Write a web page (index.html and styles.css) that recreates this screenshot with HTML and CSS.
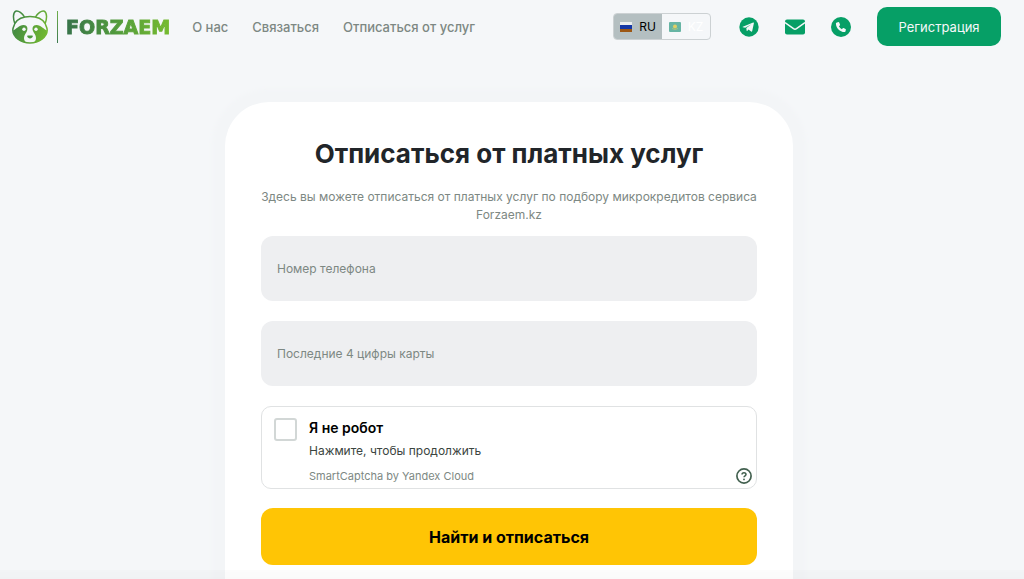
FILE: index.html
```
<!DOCTYPE html>
<html lang="ru">
<head>
<meta charset="utf-8">
<meta name="viewport" content="width=device-width, initial-scale=1">
<title>Отписаться от платных услуг</title>
<link rel="stylesheet" href="styles.css">
</head>
<body>
<header class="header">
	<a class="logo" href="#">
		<svg class="logo-icon" viewBox="0 0 36 34" aria-hidden="true">
			<defs>
				<linearGradient id="fur" gradientUnits="userSpaceOnUse" x1="0" y1="8" x2="36" y2="20">
					<stop offset="0" stop-color="#3c8444"/>
					<stop offset="1" stop-color="#72b832"/>
				</linearGradient>
			</defs>
			<g fill="none" stroke="url(#fur)" stroke-width="1.5" stroke-linejoin="round">
				<path d="M2.800 13.500C1 9 0.800 3 3.600 1.200C6.500 0.200 10.500 3.500 12.500 7"/>
				<path d="M33.200 13.500C35 9 35.200 3 32.400 1.200C29.500 0.200 25.500 3.500 23.500 7"/>
				<path d="M2.800 13.500C5.500 9 11 6.500 18 6.500S30.500 9 33.200 13.500C33.500 15.500 35.200 17 35.200 20C35.200 27 27 33 18 33S0.800 27 0.800 20C0.800 17 2.500 15.500 2.800 13.500Z"/>
			</g>
			<path fill="url(#fur)" d="M1 20.500C4 19.500 7 15 11.500 15C15.500 15 16 18.500 15 21C14 23.500 12 25 12 28C12 30 12.800 31.200 14 32.500C7 31.500 1.500 27 1 20.500Z"/>
			<path fill="url(#fur)" d="M35 20.500C32 19.500 29 15 24.500 15C20.500 15 20 18.500 21 21C22 23.500 24 25 24 28C24 30 23.200 31.200 22 32.500C29 31.500 34.500 27 35 20.500Z"/>
			<circle cx="12" cy="19.300" r="1.700" fill="#f5f7f9"/>
			<circle cx="24" cy="19.300" r="1.700" fill="#f5f7f9"/>
			<path fill="#4b963c" d="M16 25.500H20C21.500 25.500 21 28 18 28.500C15 28 14.500 25.500 16 25.500Z"/>
		</svg>
		<span class="logo-line"></span>
		<span class="logo-text">FORZAEM</span>
	</a>
	<nav class="nav">
		<a href="#">О нас</a>
		<a href="#">Связаться</a>
		<a href="#">Отписаться от услуг</a>
	</nav>
	<div class="lang">
		<button type="button" class="lang-btn active">
			<svg class="flag" viewBox="0 0 12 10" aria-hidden="true">
				<rect width="12" height="4" fill="#eceeee"/>
				<rect y="3" width="12" height="4" fill="#1537a5"/>
				<rect y="7" width="12" height="3" fill="#9c5714"/>
			</svg>
			RU
		</button>
		<button type="button" class="lang-btn">
			<svg class="flag" viewBox="0 0 12 10" aria-hidden="true">
				<rect width="12" height="10" rx="1" fill="#67b5a4"/>
				<circle cx="6" cy="4.500" r="2" fill="#e0cf64"/>
				<path d="M3 6.500Q6 8.500 9 6.500" fill="none" stroke="#b9c876" stroke-width="0.800"/>
			</svg>
			KZ
		</button>
	</div>
	<div class="contacts">
		<a href="#" aria-label="Telegram">
			<svg width="20" height="20" viewBox="0 0 20 20">
				<circle cx="10" cy="10" r="9.700" fill="#069f66"/>
				<path fill="#f5f7f9" d="M3.800 9.700L14.200 5.500Q15.100 5.300 14.900 6.300L13.200 14Q13 15 12.100 14.500L9.500 12.600L8.200 13.900Q7.700 14.300 7.600 13.600L7.300 11L12.400 7.300L6.200 10.700L3.900 10.300Q3.200 10 3.800 9.700Z"/>
			</svg>
		</a>
		<a href="#" aria-label="Почта">
			<svg width="20" height="20" viewBox="0 0 20 20">
				<rect y="2.500" width="20" height="15" rx="2" fill="#069f66"/>
				<path d="M0 5.500L8.500 11.700Q10 12.700 11.500 11.700L20 5.500" fill="none" stroke="#f5f7f9" stroke-width="1.500"/>
			</svg>
		</a>
		<a href="#" aria-label="Телефон">
			<svg width="20" height="20" viewBox="0 0 20 20">
				<circle cx="10" cy="10" r="10" fill="#069f66"/>
				<path fill="#f5f7f9" d="M5.400 5.800L7.300 5.100Q7.900 5 8.200 5.600L9 7.600Q9.200 8.100 8.800 8.500L7.900 9.200Q8.900 11.200 10.900 12.200L11.700 11.200Q12.100 10.800 12.600 11L14.500 11.900Q15.100 12.200 14.900 12.800L14.400 14.500Q14.200 15.100 13.500 15.100C8.800 15 5 11.200 4.900 6.500Q4.900 6 5.400 5.800Z"/>
			</svg>
		</a>
	</div>
	<button type="button" class="register">Регистрация</button>
</header>

<main class="main">
	<form class="card">
		<h1>Отписаться от платных услуг</h1>
		<p class="lead">Здесь вы можете отписаться от платных услуг по подбору микрокредитов сервиса Forzaem.kz</p>
		<input class="field" type="tel" placeholder="Номер телефона" aria-label="Номер телефона">
		<input class="field" type="text" placeholder="Последние 4 цифры карты" aria-label="Последние 4 цифры карты">
		<div class="captcha">
			<input type="checkbox" id="robot">
			<div class="captcha-text">
				<label for="robot">Я не робот</label>
				<span class="captcha-hint">Нажмите, чтобы продолжить</span>
				<a class="captcha-brand" href="#">SmartCaptcha by Yandex Cloud</a>
			</div>
			<button type="button" class="help" aria-label="Помощь">
				<svg width="16" height="16" viewBox="0 0 16 16" fill="none" stroke="#42604f">
					<circle cx="8" cy="8" r="7.100" stroke-width="1.700"/>
					<path d="M6 6.500C6 4 10 4 10 6.500C10 7.800 8 7.800 8 9.300" stroke-width="1.500"/>
					<circle cx="8" cy="11.400" r="0.900" fill="#42604f" stroke="none"/>
				</svg>
			</button>
		</div>
		<button type="submit" class="submit">Найти и отписаться</button>
	</form>
</main>
<div class="bottom-shade"></div>
</body>
</html>
```
FILE: styles.css
```
* {
	box-sizing: border-box;
}

html {
	scrollbar-width: none;
}

body {
	margin: 0;
	padding-right: 6px;
	background: #f5f7f9;
	color: #212529;
	font-family: Inter, "Liberation Sans", sans-serif;
	font-size: 12px;
}

a {
	color: inherit;
	text-decoration: none;
}

button {
	border: 0;
	font-family: inherit;
	cursor: pointer;
}

svg {
	display: block;
}

/* header */
.header {
	display: flex;
	align-items: center;
	height: 53px;
	padding: 0 17px 0 12px;
}

.logo {
	display: flex;
	align-items: center;
	margin-right: 22px;
}

.logo-icon {
	width: 36px;
	height: 34px;
}

.logo-line {
	width: 1px;
	height: 32px;
	margin: 0 8px 0 9px;
	background: linear-gradient(#6faf4a, #3d7a50);
}

.logo-text {
	font-family: "DejaVu Sans", sans-serif;
	font-size: 19px;
	font-weight: bold;
	background: linear-gradient(90deg, #37734a, #4f983d 45%, #76bb30);
	-webkit-background-clip: text;
	background-clip: text;
	-webkit-text-stroke: 1px transparent;
	color: transparent;
}

.nav {
	display: flex;
	gap: 24px;
	color: #7d8883;
	font-family: Inter, sans-serif;
	font-size: 13px;
	font-weight: 500;
	white-space: nowrap;
}

.lang {
	display: flex;
	height: 27px;
	margin-left: auto;
	border: 1px solid #ccd1d3;
	border-radius: 4px;
	overflow: hidden;
}

.lang-btn {
	display: flex;
	align-items: center;
	justify-content: center;
	gap: 7px;
	width: 48px;
	padding: 0;
	background: transparent;
	color: #fff;
	font-size: 12px;
}

.lang-btn.active {
	background: #b4bfc1;
	color: #000;
}

.flag {
	width: 12px;
	height: 10px;
}

.contacts {
	display: flex;
	gap: 26px;
	margin: 0 26px 0 28px;
}

.register {
	width: 124px;
	height: 39px;
	border-radius: 10px;
	background: #069f66;
	color: #f5f7f9;
	font-size: 13px;
}

/* form */
.main {
	padding: 49px 16px;
}

.card {
	display: flex;
	flex-direction: column;
	max-width: 568px;
	margin: 0 auto;
	padding: 36px 36px 72px;
	border-radius: 44px;
	background: #fff;
	box-shadow: 0 0 4px 13px #f3f5f7;
}

h1 {
	margin: 0 0 19px;
	font-size: 26px;
	font-weight: 700;
	line-height: 31px;
	text-align: center;
}

.lead {
	margin: 0 0 12px;
	color: #7d8883;
	font-size: 12px;
	line-height: 18px;
	text-align: center;
}

.field {
	width: 100%;
	height: 65px;
	margin-bottom: 20px;
	padding: 0 16px;
	border: 0;
	border-radius: 12px;
	background: #eeeff1;
	font-family: inherit;
	font-size: 12px;
}

.field::placeholder {
	color: #7d8883;
	opacity: 1;
}

.captcha {
	display: flex;
	height: 83px;
	margin-bottom: 19px;
	padding: 11px 4px 4px 12px;
	border: 1px solid #e0e2e3;
	border-radius: 10px;
}

.captcha input {
	appearance: none;
	width: 23px;
	height: 23px;
	margin: 0;
	border: 2px solid #d2d7d6;
	border-radius: 3px;
}

.captcha input:checked {
	background: #069f66;
}

.captcha-text {
	display: flex;
	flex-direction: column;
	flex: 1;
	margin-left: 12px;
}

.captcha-text label {
	color: #000;
	font-size: 14px;
	font-weight: 600;
	line-height: 20px;
}

.captcha-hint {
	margin: 4px 0 8px;
	color: #3b4540;
	font-size: 12px;
	line-height: 18px;
}

.captcha-brand {
	color: #7d8883;
	font-size: 11px;
	line-height: 16px;
}

.help {
	align-self: flex-end;
	padding: 0;
	background: none;
}

.submit {
	height: 57px;
	border-radius: 12px;
	background: #ffc505;
	color: #000;
	font-size: 16px;
	font-weight: 700;
}

.bottom-shade {
	position: fixed;
	right: 0;
	bottom: 0;
	left: 0;
	height: 9px;
	background: linear-gradient(rgba(0, 0, 0, 0.01), rgba(0, 0, 0, 0.02));
	pointer-events: none;
}
```
